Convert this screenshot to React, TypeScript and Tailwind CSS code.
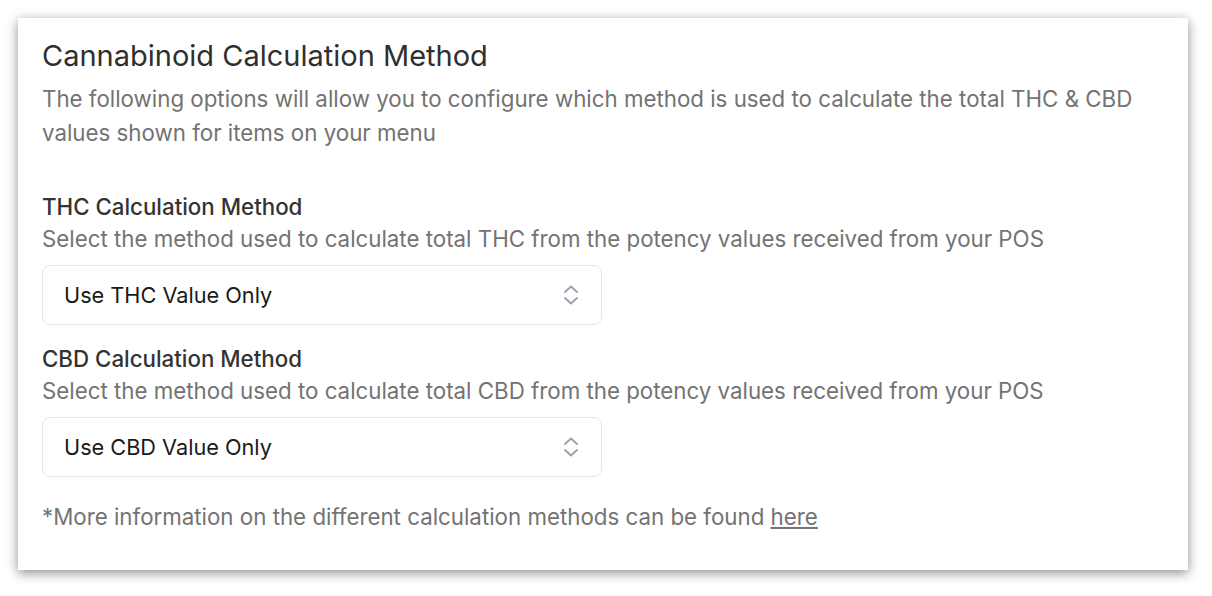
import React from "react";

const ChevronUpDown = () => (
  <svg width="16" height="22" viewBox="0 0 16 22" fill="none" className="text-[#9ca3af]">
    <path d="M2 8l6-5.5 6 5.5" stroke="currentColor" strokeWidth="2" strokeLinecap="round" strokeLinejoin="round" />
    <path d="M2 14l6 5.5 6-5.5" stroke="currentColor" strokeWidth="2" strokeLinecap="round" strokeLinejoin="round" />
  </svg>
);

const MethodSelect = ({ value }: { value: string }) => (
  <div className="flex h-[60px] w-[560px] items-center justify-between rounded-lg border border-[#e5e7eb] bg-white pl-[21px] pr-[22px]">
    <span className="text-[21.7px] text-[#1a1a1a]">{value}</span>
    <ChevronUpDown />
  </div>
);

const App: React.FC = () => {
  const sections = [
    {
      label: "THC Calculation Method",
      help: "Select the method used to calculate total THC from the potency values received from your POS",
      value: "Use THC Value Only",
    },
    {
      label: "CBD Calculation Method",
      help: "Select the method used to calculate total CBD from the potency values received from your POS",
      value: "Use CBD Value Only",
    },
  ];

  return (
    <div className="min-h-screen bg-white pl-[18px] pt-[18px] font-['Inter',sans-serif]">
      <div className="w-[1170px] bg-white pb-[37px] pl-6 pt-5 shadow-[0_3px_11px_rgba(0,0,0,0.45)]">
        <h2 className="text-[29px] leading-[36px] text-[#2f2f2f]">Cannabinoid Calculation Method</h2>
        <p className="mt-2 w-[1130px] text-[22.3px] leading-[34px] text-[#737373]">
          The following options will allow you to configure which method is used to calculate the total THC &amp; CBD
          values shown for items on your menu
        </p>

        <div className="mt-[41px] flex flex-col gap-[18px]">
          {sections.map((s) => (
            <div key={s.label}>
              <h3 className="text-[22.3px] font-medium leading-[32px] text-[#333333]">{s.label}</h3>
              <p className="text-[22.3px] leading-[32px] text-[#737373]">{s.help}</p>
              <div className="mt-[10px]">
                <MethodSelect value={s.value} />
              </div>
            </div>
          ))}
        </div>

        <p className="mt-6 text-[22.3px] leading-[32px] text-[#737373]">
          *More information on the different calculation methods can be found{" "}
          <a href="#" className="underline">
            here
          </a>
        </p>
      </div>
    </div>
  );
};

export default App;
